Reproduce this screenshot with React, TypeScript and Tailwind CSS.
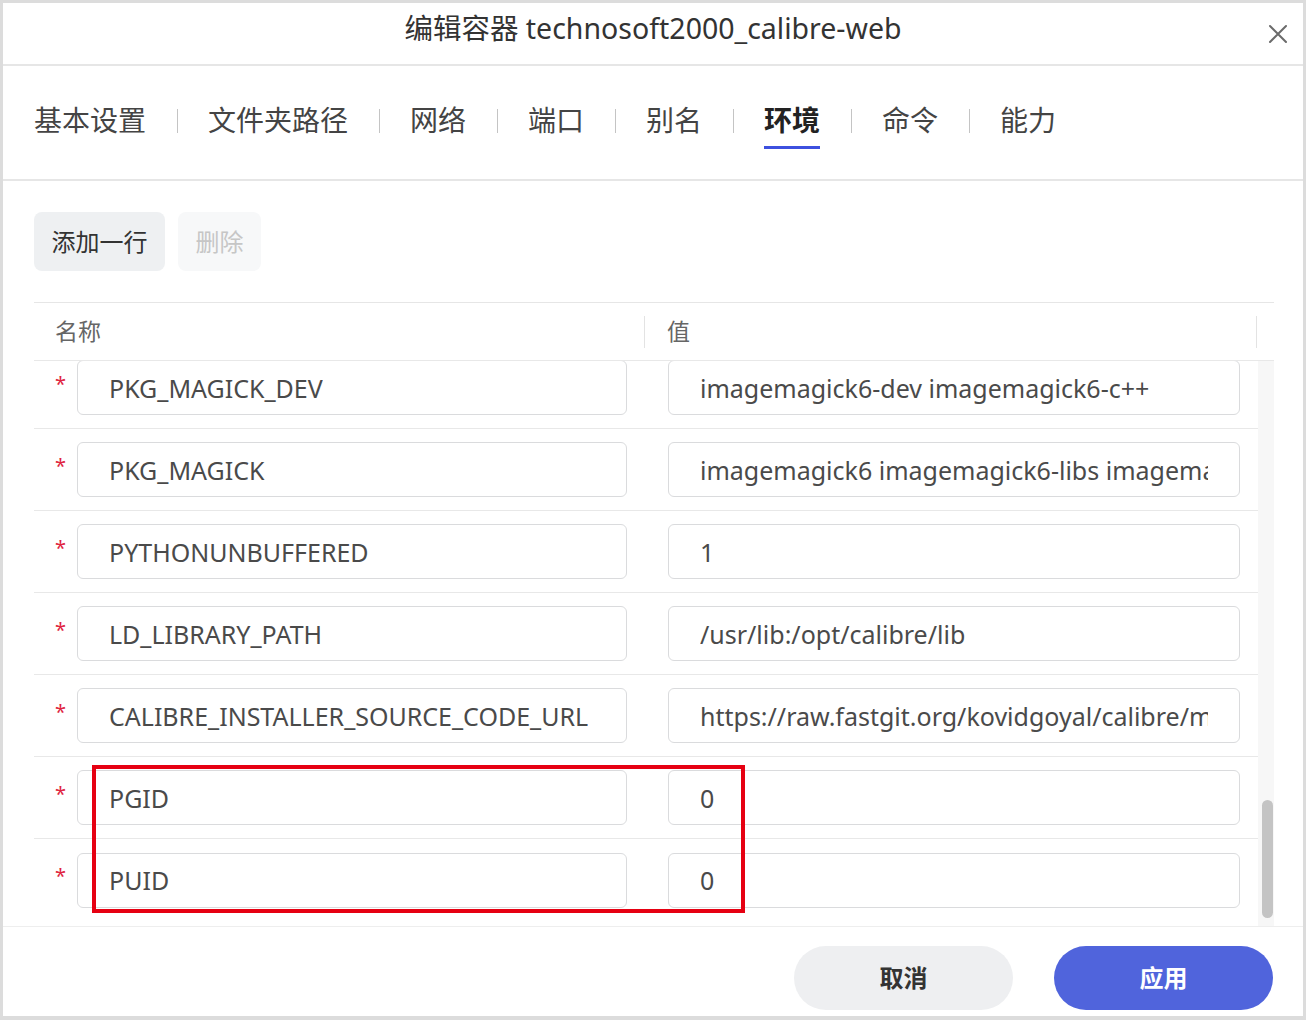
import React from "react";

const tabs = ["基本设置", "文件夹路径", "网络", "端口", "别名", "环境", "命令", "能力"];

const rows: [string, string][] = [
  ["PKG_MAGICK_DEV", "imagemagick6-dev imagemagick6-c++"],
  ["PKG_MAGICK", "imagemagick6 imagemagick6-libs imagemagick6-dev"],
  ["PYTHONUNBUFFERED", "1"],
  ["LD_LIBRARY_PATH", "/usr/lib:/opt/calibre/lib"],
  ["CALIBRE_INSTALLER_SOURCE_CODE_URL", "https://raw.fastgit.org/kovidgoyal/calibre/master/setup/linux-installer.py"],
  ["PGID", "0"],
  ["PUID", "0"],
];

function Field({ value, w }: { value: string; w: string }) {
  return (
    <div className={`${w} h-[55px] border border-[#dadbdd] rounded-[6px] bg-white px-[31px] flex items-center`}>
      <div className="overflow-hidden whitespace-nowrap text-[25px] leading-[36px] text-[#4a4a4a]">{value}</div>
    </div>
  );
}

export default function App() {
  return (
    <div className="w-[1306px] h-[1020px] font-['Noto_Sans','Noto_Sans_CJK_SC',sans-serif]">
      <div className="relative w-full h-full bg-white border-[3px] border-b-4 border-[#dcdcdc] flex flex-col">
        {/* Header */}
        <div className="relative h-[63px] shrink-0 border-b-2 border-[#e6e6e6] flex justify-center pt-[7px]">
          <div className="text-[28.5px] leading-[36px] text-[#333]">编辑容器 technosoft2000_calibre-web</div>
          <svg className="absolute right-[15px] top-[21px]" width="20" height="20" viewBox="0 0 20 20">
            <path d="M2 2 L18 18 M18 2 L2 18" stroke="#6b6b6b" strokeWidth="2" strokeLinecap="round" />
          </svg>
        </div>

        {/* Tabs */}
        <div className="h-[115px] shrink-0 border-b-2 border-[#e6e6e6] flex items-start pl-[31px] pt-[34px]">
          {tabs.map((t, i) => (
            <React.Fragment key={t}>
              {i > 0 && <div className="w-px h-[24px] bg-[#c4c4c4] mx-[30.5px] mt-[9px]" />}
              <div className="flex flex-col items-center">
                <div
                  className={`text-[28px] leading-[40px] ${
                    i === 5 ? "font-bold text-[#222]" : "text-[#444]"
                  }`}
                >
                  {t}
                </div>
                <div className={`mt-[6px] h-[3px] w-full ${i === 5 ? "bg-[#3d50df]" : "bg-transparent"}`} />
              </div>
            </React.Fragment>
          ))}
        </div>

        {/* Content */}
        <div className="pl-[31px] pr-[29px] pt-[31px] shrink-0">
          <div className="flex gap-[13px]">
            <div className="h-[59px] px-[17.5px] rounded-[8px] bg-[#eef0f2] flex items-center text-[24px] text-[#333]">添加一行</div>
            <div className="h-[59px] px-[17.5px] rounded-[8px] bg-[#f7f8f9] flex items-center text-[24px] text-[#c6c6c6]">删除</div>
          </div>

          <div className="mt-[31px] border-t border-[#e6e6e6]">
            <div className="h-[58px] border-b border-[#e8e8e8] grid grid-cols-[611px_612px_1fr] items-center">
              <div className="flex items-center justify-between pl-[21px]">
                <span className="text-[23px] text-[#666]">名称</span>
                <span className="w-px h-[32px] bg-[#e3e3e3]" />
              </div>
              <div className="flex items-center justify-between pl-[22px]">
                <span className="text-[23px] text-[#666]">值</span>
                <span className="w-px h-[32px] bg-[#e3e3e3]" />
              </div>
              <div />
            </div>

            <div className="flex h-[565px]">
              <div className="w-[1224px] h-full overflow-hidden flex flex-col justify-end pb-[5px]">
                {rows.map(([k, v], i) => (
                  <div
                    key={k}
                    className={`shrink-0 h-[82px] grid grid-cols-[611px_1fr] items-center ${
                      i < rows.length - 1 ? "border-b border-[#e8e8e8]" : ""
                    }`}
                  >
                    <div className="flex items-center pl-[21px]">
                      <span className="w-[22px] text-[20px] leading-[20px] text-[#e0243f] -mt-[8px]">*</span>
                      <Field value={k} w="w-[550px]" />
                    </div>
                    <div className="pl-[23px]">
                      <Field value={v} w="w-[572px]" />
                    </div>
                  </div>
                ))}
              </div>
              <div className="w-[16px] h-full bg-[#f7f7f7] flex flex-col justify-end pl-[4px] pb-[8px]">
                <div className="w-[11px] h-[118px] rounded-full bg-[#c4c4c4]" />
              </div>
            </div>
          </div>
        </div>

        {/* Footer */}
        <div className="flex-1 border-t border-[#eeeeee] flex justify-end items-start gap-[41px] pr-[30px] pt-[19px]">
          <div className="w-[219px] h-[64px] rounded-full bg-[#eeeff1] flex items-center justify-center text-[24px] font-bold text-[#333]">取消</div>
          <div className="w-[219px] h-[64px] rounded-full bg-[#5064dc] flex items-center justify-center text-[24px] font-bold text-white">应用</div>
        </div>

        {/* Annotation highlight */}
        <div className="absolute left-[89px] top-[762px] w-[653px] h-[148px] border-[4px] border-[#e60012]" />
      </div>
    </div>
  );
}
